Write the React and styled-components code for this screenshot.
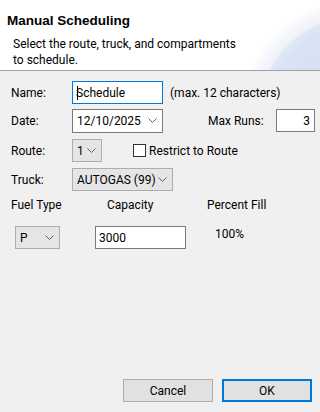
import styled, { createGlobalStyle } from 'styled-components';

const GlobalStyle = createGlobalStyle`
  html, body {
    margin: 0;
    padding: 0;
    background: #f0f0f0;
  }
  body {
    font-family: Roboto, "Liberation Sans", sans-serif;
    font-size: 12px;
    color: #000000;
  }
`;

function Chevron() {
  return (
    <svg width="9" height="5" viewBox="0 0 9 5">
      <path d="M0.5 0.5 L4.5 4.5 L8.5 0.5" fill="none" stroke="#606060" strokeWidth="1" />
    </svg>
  );
}

function Select({ value, width, light }) {
  return (
    <SelectBox $width={width} $light={light}>
      <span>{value}</span>
      <Chevron />
    </SelectBox>
  );
}

export default function App() {
  return (
    <>
      <GlobalStyle />
      <Dialog>
        <Header>
          <Title>Manual Scheduling</Title>
          <Subtitle>
            Select the route, truck, and compartments
            <br />
            to schedule.
          </Subtitle>
        </Header>

        <Body>
          <Row $top={10}>
            <Label>Name:</Label>
            <TextBox $width={91} $focused>
              <Caret />
              Schedule
            </TextBox>
            <Hint>(max. 12 characters)</Hint>
          </Row>

          <Row $top={5}>
            <Label>Date:</Label>
            <Select value="12/10/2025" width={91} light />
            <SideLabel>Max Runs:</SideLabel>
            <TextBox $width={39} $right>3</TextBox>
          </Row>

          <Row $top={7}>
            <Label>Route:</Label>
            <Select value="1" width={30} />
            <Check>
              <Box />
              Restrict to Route
            </Check>
          </Row>

          <Row $top={6}>
            <Label>Truck:</Label>
            <Select value="AUTOGAS (99)" width={101} />
          </Row>

          <Columns>
            <ColHead>Fuel Type</ColHead>
            <ColHead>Capacity</ColHead>
            <ColHead>Percent Fill</ColHead>
          </Columns>

          <Compartment>
            <Select value="P" width={45} />
            <TextBox $width={91}>3000</TextBox>
            <Percent>100%</Percent>
          </Compartment>
        </Body>

        <Footer>
          <Button>Cancel</Button>
          <Button $primary>OK</Button>
        </Footer>
      </Dialog>
    </>
  );
}

const Dialog = styled.div`
  width: 320px;
  height: 412px;
  display: flex;
  flex-direction: column;
  background: #f0f0f0;
  overflow: hidden;
`;

const Header = styled.div`
  height: 71px;
  box-sizing: border-box;
  border-bottom: 1px solid #a0a0a0;
  background:
    radial-gradient(circle at 358px 115px, #d2ddf0 0, #dae3f3 90px, #e0e8f6 98px, #eef2fa 100px, #f5f7fc 108px, #ffffff 117px),
    #ffffff;
`;

const Title = styled.div`
  padding: 12px 0 0 7px;
  font-family: "Liberation Sans", Arial, sans-serif;
  font-weight: bold;
  font-size: 13.5px;
  line-height: 18px;
`;

const Subtitle = styled.div`
  margin: 6px 0 0 13px;
  line-height: 16px;
`;

const Body = styled.div`
  padding-left: 11px;
  display: flex;
  flex-direction: column;
`;

const Row = styled.div`
  display: flex;
  align-items: center;
  height: 23px;
  margin-top: ${(p) => p.$top}px;
`;

const Label = styled.div`
  width: 61px;
  flex-shrink: 0;
`;

const SideLabel = styled.div`
  margin-left: 45px;
  width: 68px;
`;

const Hint = styled.div`
  margin-left: 7px;
`;

const TextBox = styled.div`
  position: relative;
  width: ${(p) => p.$width}px;
  height: 23px;
  box-sizing: border-box;
  border: 1px solid ${(p) => (p.$focused ? '#0078d7' : '#7a7a7a')};
  background: #ffffff;
  display: flex;
  align-items: center;
  justify-content: ${(p) => (p.$right ? 'flex-end' : 'flex-start')};
  padding: 0 4px 0 3px;
`;

const Caret = styled.span`
  position: absolute;
  left: 4px;
  top: 4px;
  width: 1px;
  height: 14px;
  background: #000000;
`;

const SelectBox = styled.div`
  width: ${(p) => p.$width}px;
  height: ${(p) => (p.$light ? 24 : 23)}px;
  box-sizing: border-box;
  flex-shrink: 0;
  border: 1px solid ${(p) => (p.$light ? '#7a7a7a' : '#adadad')};
  background: ${(p) => (p.$light ? '#ffffff' : '#e5e5e5')};
  display: flex;
  align-items: center;
  justify-content: space-between;
  padding: 0 5px 0 4px;
`;

const Check = styled.label`
  display: flex;
  align-items: center;
  margin-left: 31px;
  gap: 3px;
`;

const Box = styled.span`
  width: 13px;
  height: 13px;
  box-sizing: border-box;
  border: 1px solid #333333;
  background: #ffffff;
`;

const Columns = styled.div`
  display: grid;
  grid-template-columns: 96px 100px auto;
  height: 16px;
  margin-top: 6px;
`;

const ColHead = styled.span`
  line-height: 16px;
`;

const Compartment = styled.div`
  display: flex;
  align-items: flex-start;
  margin: 13px 0 0 4px;
  gap: 35px;
`;

const Percent = styled.div`
  margin: 0 0 0 -6px;
  line-height: 16px;
`;

const Footer = styled.div`
  margin-top: auto;
  display: flex;
  justify-content: flex-end;
  gap: 9px;
  padding: 0 8px 10px 0;
`;

const Button = styled.button`
  width: 90px;
  height: 23px;
  box-sizing: border-box;
  background: #e1e1e1;
  border: ${(p) => (p.$primary ? '2px solid #0078d7' : '1px solid #adadad')};
  font-family: Roboto, "Liberation Sans", sans-serif;
  font-size: 12px;
  color: #000000;
  padding: 0;
`;
